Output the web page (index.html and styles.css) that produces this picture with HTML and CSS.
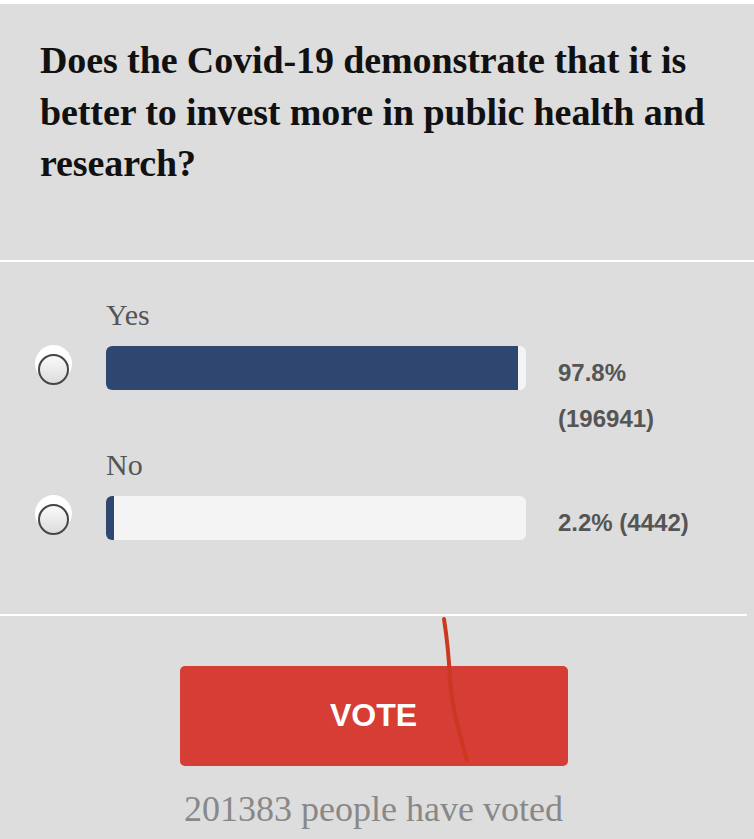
FILE: index.html
```html
<!DOCTYPE html>
<html lang="en">
<head>
    <meta charset="UTF-8">
    <meta name="viewport" content="width=device-width, initial-scale=1.0">
    <title>Poll</title>
    <link rel="stylesheet" href="styles.css">
</head>
<body>
    <div class="poll">
        <div class="poll-question">
            <h2>Does the Covid-19 demonstrate that it is better to invest more in public health and research?</h2>
        </div>

        <div class="poll-options">
            <div class="option">
                <div class="option-label">Yes</div>
                <div class="option-row">
                    <span class="radio"></span>
                    <div class="bar"><div class="bar-fill" style="width: 98%"></div></div>
                    <div class="result">97.8% (196941)</div>
                </div>
            </div>
            <div class="option">
                <div class="option-label">No</div>
                <div class="option-row">
                    <span class="radio"></span>
                    <div class="bar"><div class="bar-fill" style="width: 2%"></div></div>
                    <div class="result">2.2% (4442)</div>
                </div>
            </div>
        </div>

        <div class="poll-footer">
            <button type="button" class="vote-button">VOTE</button>
            <div class="vote-count">201383 people have voted</div>
        </div>
    </div>

    <!-- hand drawn mark on the screenshot -->
    <svg class="scribble" width="754" height="839" viewBox="0 0 754 839">
        <path d="M444 619 C447 638 449 658 450 680 C452 708 460 736 467 760" fill="none" stroke="#cc3722" stroke-width="4" stroke-linecap="round"/>
    </svg>
</body>
</html>
```

FILE: styles.css
```css
body {
    margin: 0;
    background-color: #dddddd;
    border-top: 4px solid #fff;
    position: relative;
    min-height: 835px;
}

.poll {
    width: 100%;
}

.poll-question {
    padding: 31px 40px 70px 40px;
    border-bottom: 2px solid #fff;
}

.poll-question h2 {
    margin: 0;
    font-family: "Liberation Serif", serif;
    font-weight: bold;
    font-size: 38px;
    line-height: 51.5px;
    letter-spacing: -0.1px;
    color: #111;
    max-width: 690px;
}

.poll-options {
    padding: 35px 0 68px 38px;
    width: 709px;
    border-bottom: 2px solid #fff;
}

.option + .option {
    margin-top: 5px;
}

.option-label {
    margin-left: 68px;
    margin-bottom: 13px;
    font-family: "Liberation Serif", serif;
    font-size: 30px;
    line-height: 36px;
    color: #555;
}

.option-row {
    display: flex;
    align-items: flex-start;
}

.radio {
    width: 31px;
    height: 31px;
    margin-top: 8px;
    margin-right: 37px;
    box-sizing: border-box;
    border: 2.5px solid #454545;
    border-radius: 50%;
    background: linear-gradient(#fafafa, #dcdcdc);
    box-shadow: 0 -6px 0 3px #fff;
    flex-shrink: 0;
}

.bar {
    width: 420px;
    height: 44px;
    background-color: #f4f4f4;
    border-radius: 6px;
    overflow: hidden;
    flex-shrink: 0;
}

.bar-fill {
    height: 100%;
    background-color: #2f4770;
}

.result {
    margin-left: 32px;
    padding-top: 4px;
    width: 150px;
    font-family: "Liberation Sans", Arial, sans-serif;
    font-weight: bold;
    font-size: 24px;
    line-height: 46px;
    color: #555;
}

.poll-footer {
    width: 747px;
    padding-top: 50px;
    display: flex;
    flex-direction: column;
    align-items: center;
}

.vote-button {
    width: 388px;
    height: 100px;
    border: none;
    border-radius: 5px;
    background-color: #d53d35;
    color: #fff;
    font-family: "Liberation Sans", Arial, sans-serif;
    font-weight: bold;
    font-size: 32px;
    cursor: pointer;
}

.vote-count {
    margin-top: 23px;
    font-family: "Liberation Serif", serif;
    font-size: 36px;
    line-height: 40px;
    color: #888;
}

.scribble {
    position: absolute;
    top: -4px;
    left: 0;
    pointer-events: none;
}
```
